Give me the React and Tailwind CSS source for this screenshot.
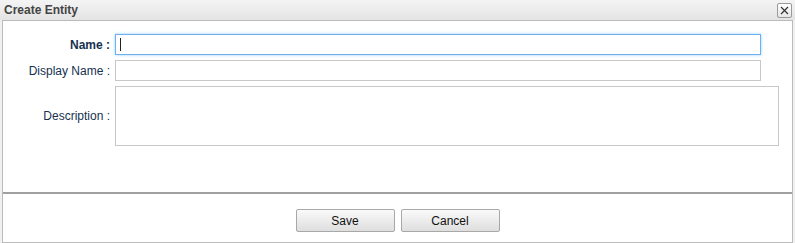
export default function App() {
  return (
    <div className="w-[795px] h-[243px] bg-[#f0f0f0] font-['Liberation_Sans',Arial,sans-serif] text-[12px] flex flex-col">
      {/* Title bar */}
      <div className="h-[20px] flex items-center justify-between pl-[4px] pr-[3px] bg-gradient-to-b from-[#f4f4f4] to-[#e4e4e4]">
        <span className="text-[#444] font-bold text-[12px]">Create Entity</span>
        <button className="w-[15px] h-[15px] mt-[1px] border border-[#999] rounded-[2px] bg-gradient-to-b from-white to-[#e6e6e6] flex items-center justify-center">
          <svg width="9" height="9" viewBox="0 0 9 9">
            <path d="M1 1 L8 8 M8 1 L1 8" stroke="#333" strokeWidth="1.2" />
          </svg>
        </button>
      </div>

      {/* Body */}
      <div className="flex-1 ml-[2px] mr-[2px] border border-[#bbb] bg-white flex flex-col">
        <div className="h-[173px] pt-[13px] flex flex-col gap-[5px] border-b-2 border-[#a0a0a0]">
          <div className="flex items-center h-[21px]">
            <label className="w-[112px] text-right pr-[5px] font-bold text-[#15314f]">Name :</label>
            <div className="w-[646px] h-[21px] border border-[#6eb0ec] shadow-[0_0_3px_#9fd0fb] flex items-center pl-[4px]">
              <span className="w-[1px] h-[13px] bg-[#222]" />
            </div>
          </div>
          <div className="flex items-center h-[21px]">
            <label className="w-[112px] text-right pr-[5px] text-[#15314f]">Display Name :</label>
            <input className="w-[646px] h-[21px] border border-[#c8c8c8] outline-none" />
          </div>
          <div className="flex items-center h-[60px]">
            <label className="w-[112px] text-right pr-[5px] text-[#15314f]">Description :</label>
            <textarea className="w-[664px] h-[60px] border border-[#c8c8c8] outline-none resize-none" />
          </div>
        </div>
        <div className="flex-1 flex items-start justify-center gap-[6px] pt-[15px]">
          <button className="w-[99px] h-[23px] border border-[#a8a8a8] rounded-[2px] bg-gradient-to-b from-[#fafafa] to-[#dedede] text-[#111] text-[12px]">
            Save
          </button>
          <button className="w-[99px] h-[23px] border border-[#a8a8a8] rounded-[2px] bg-gradient-to-b from-[#fafafa] to-[#dedede] text-[#111] text-[12px]">
            Cancel
          </button>
        </div>
      </div>
    </div>
  );
}
